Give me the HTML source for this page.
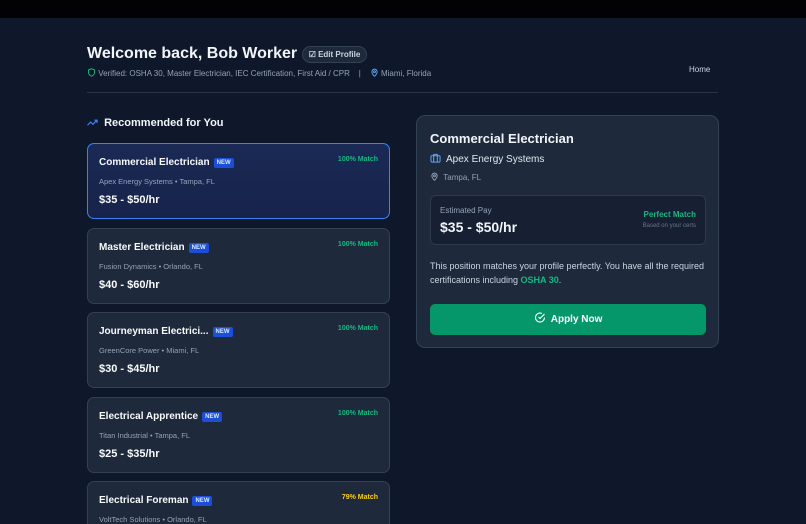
<!DOCTYPE html><html><head><style>
*{margin:0;padding:0;box-sizing:border-box}
html,body{width:806px;height:524px;overflow:hidden}
body{background:#0f172a;font-family:"Liberation Sans",sans-serif;color:#f1f5f9;position:relative}
.top{position:absolute;left:0;top:0;width:806px;height:18px;background:#020204}
.a{position:absolute}
.card{position:absolute;left:87px;width:303px;height:76px;background:#1e293b;border:1px solid #334155;border-radius:7px}
.card.sel{border:1.5px solid #3b82f6;background:linear-gradient(#1a2a55,#17234a)}
.card h3{position:absolute;left:11px;top:13px;font-size:10px;font-weight:bold;color:#f8fafc;white-space:nowrap}
.new{display:inline-block;background:#1d4ed8;color:#dbeafe;font-size:6px;padding:2px 3px;border-radius:2px;margin-left:4px;vertical-align:1px}
.card .m{position:absolute;right:11px;top:12px;font-size:7px;font-weight:bold;color:#10b981}
.card .c{position:absolute;left:11px;top:33px;font-size:7.5px;color:#94a3b8}
.card .p{position:absolute;left:11px;top:50px;font-size:11px;font-weight:bold;color:#f8fafc}
</style></head><body>
<div class="top"></div>
<div class="a" style="left:87px;top:45px;font-size:16px;font-weight:bold;white-space:nowrap">Welcome back, Bob Worker</div>
<div class="a" style="left:302px;top:46px;width:65px;height:17px;border-radius:9px;background:#1e293b;border:1px solid #334155;font-size:8px;font-weight:bold;color:#cbd5e1;line-height:15px;text-align:center">☑ Edit Profile</div>
<div class="a" style="left:87px;top:68px;font-size:8px;color:#94a3b8;white-space:nowrap"><svg width="9" height="9" viewBox="0 0 24 24" fill="none" stroke="#10b981" stroke-width="2.5" style="vertical-align:-1px"><path d="M12 2l8 3v7c0 5-4 8-8 10-4-2-8-5-8-10V5z"/></svg> Verified: OSHA 30, Master Electrician, IEC Certification, First Aid / CPR &nbsp;&nbsp;&nbsp;| &nbsp;&nbsp;&nbsp;<svg width="9" height="9" viewBox="0 0 24 24" fill="none" stroke="#60a5fa" stroke-width="2.5" style="vertical-align:-1px"><path d="M12 22s7-6 7-12a7 7 0 0 0-14 0c0 6 7 12 7 12z"/><circle cx="12" cy="10" r="2.5"/></svg> Miami, Florida</div>
<div class="a" style="left:689px;top:65px;font-size:8px;color:#cbd5e1">Home</div>
<div class="a" style="left:87px;top:92px;width:631px;height:1px;background:#273449"></div>
<div class="a" style="left:87px;top:117px;font-size:11px;font-weight:bold;white-space:nowrap"><svg width="11" height="9" viewBox="0 0 24 18" fill="none" stroke="#3b82f6" stroke-width="2.5" style="vertical-align:-1px"><path d="M1 15l7-7 5 5 9-9M16 4h6v6"/></svg>&nbsp; Recommended for You</div>

<div class="card sel" style="top:143px"><h3>Commercial Electrician<span class="new">NEW</span></h3><div class="m">100% Match</div><div class="c">Apex Energy Systems • Tampa, FL</div><div class="p">$35 - $50/hr</div></div>
<div class="card" style="top:228px"><h3>Master Electrician<span class="new">NEW</span></h3><div class="m">100% Match</div><div class="c">Fusion Dynamics • Orlando, FL</div><div class="p">$40 - $60/hr</div></div>
<div class="card" style="top:312px"><h3>Journeyman Electrici...<span class="new">NEW</span></h3><div class="m">100% Match</div><div class="c">GreenCore Power • Miami, FL</div><div class="p">$30 - $45/hr</div></div>
<div class="card" style="top:397px"><h3>Electrical Apprentice<span class="new">NEW</span></h3><div class="m">100% Match</div><div class="c">Titan Industrial • Tampa, FL</div><div class="p">$25 - $35/hr</div></div>
<div class="card" style="top:481px"><h3>Electrical Foreman<span class="new">NEW</span></h3><div class="m" style="color:#facc15">79% Match</div><div class="c">VoltTech Solutions • Orlando, FL</div><div class="p">$45 - $65/hr</div></div>

<div class="a" style="left:416px;top:115px;width:303px;height:233px;background:#1e293b;border:1px solid #334155;border-radius:9px">
<div class="a" style="left:13px;top:15px;font-size:13px;font-weight:bold;white-space:nowrap">Commercial Electrician</div>
<div class="a" style="left:13px;top:37px;font-size:10px;color:#e2e8f0;white-space:nowrap"><svg width="11" height="10" viewBox="0 0 24 22" fill="none" stroke="#60a5fa" stroke-width="2.2" style="vertical-align:-1px"><rect x="2" y="6" width="20" height="14" rx="2"/><path d="M8 6V3h8v3M8 6v14M16 6v14"/></svg>&nbsp; Apex Energy Systems</div>
<div class="a" style="left:13px;top:56px;font-size:8px;color:#94a3b8;white-space:nowrap"><svg width="9" height="9" viewBox="0 0 24 24" fill="none" stroke="#94a3b8" stroke-width="2.5" style="vertical-align:-1px"><path d="M12 22s7-6 7-12a7 7 0 0 0-14 0c0 6 7 12 7 12z"/><circle cx="12" cy="10" r="2.5"/></svg>&nbsp; Tampa, FL</div>
<div class="a" style="left:13px;top:79px;width:276px;height:50px;background:#172033;border:1px solid #2d3a50;border-radius:6px">
<div class="a" style="left:9px;top:10px;font-size:8px;color:#94a3b8">Estimated Pay</div>
<div class="a" style="left:9px;top:23px;font-size:14px;font-weight:bold">$35 - $50/hr</div>
<div class="a" style="right:9px;top:14px;font-size:8px;font-weight:bold;color:#10b981">Perfect Match</div>
<div class="a" style="right:9px;top:27px;font-size:6px;color:#64748b">Based on your certs</div></div>
<div class="a" style="left:13px;top:143px;width:280px;font-size:9px;line-height:14px;color:#cbd5e1">This position matches your profile perfectly. You have all the required certifications including <b style="color:#10b981">OSHA 30</b>.</div>
<div class="a" style="left:13px;top:188px;width:276px;height:31px;background:#059669;border-radius:5px;font-size:10px;font-weight:bold;color:#fff;text-align:center;line-height:31px"><svg width="12" height="12" viewBox="0 0 24 24" fill="none" stroke="#fff" stroke-width="2.2" style="vertical-align:-2px"><path d="M21 11a9 9 0 1 1-5-8M21 4l-9 9-3-3"/></svg>&nbsp; Apply Now</div>
</div>
</body></html>
